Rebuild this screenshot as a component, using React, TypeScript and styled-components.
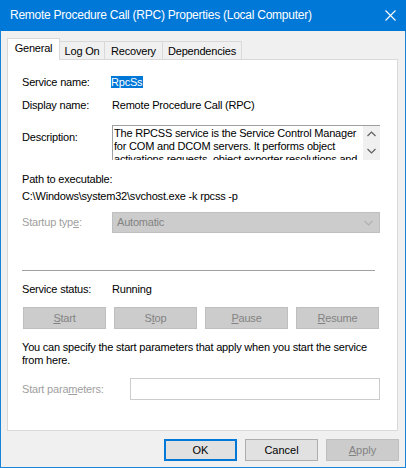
import styled, { createGlobalStyle } from "styled-components";

const GlobalStyle = createGlobalStyle`
  html, body {
    margin: 0;
    padding: 0;
    background: #f0f0f0;
  }
  body {
    font-family: "Liberation Sans", Arial, sans-serif;
    font-size: 11px;
    letter-spacing: -0.2px;
    color: #000;
  }
`;

const Window = styled.div`
  box-sizing: border-box;
  width: 406px;
  height: 468px;
  border: 1px solid #1883d7;
  border-top: 0;
  background: #f0f0f0;
  display: flex;
  flex-direction: column;
`;

const TitleBar = styled.div`
  height: 31px;
  margin: 0 -1px;
  background: #0078d7;
  color: #fff;
  display: flex;
  align-items: center;
  padding: 0 0 1px 10px;
  box-sizing: border-box;
  font-size: 12px;
  letter-spacing: -0.25px;
`;

const Title = styled.span`
  flex: 1;
`;

const CloseButton = styled.div`
  width: 32px;
  height: 30px;
  display: flex;
  align-items: center;
  justify-content: center;
`;

const Body = styled.div`
  flex: 1;
  padding: 7px 7px 0 6px;
  display: flex;
  flex-direction: column;
`;

const TabBar = styled.div`
  display: flex;
  align-items: flex-end;
  height: 21px;
`;

const Tab = styled.div<{ $active?: boolean; $w: number }>`
  box-sizing: border-box;
  width: ${(p) => p.$w}px;
  height: ${(p) => (p.$active ? 22 : 18)}px;
  margin-bottom: ${(p) => (p.$active ? -1 : 0)}px;
  margin-right: -1px;
  border: 1px solid #d9d9d9;
  border-bottom: 0;
  background: ${(p) => (p.$active ? "#fff" : "#f0f0f0")};
  position: relative;
  z-index: ${(p) => (p.$active ? 1 : 0)};
  display: flex;
  align-items: center;
  justify-content: center;
  padding-bottom: ${(p) => (p.$active ? 3 : 0)}px;
`;

const Panel = styled.div`
  box-sizing: border-box;
  height: 372px;
  border: 1px solid #d9d9d9;
  background: #fff;
  padding: 16px 18px 0 14px;
  display: flex;
  flex-direction: column;
`;

const Field = styled.div<{ $top: number; $label?: number; $align?: string }>`
  display: grid;
  grid-template-columns: ${(p) => p.$label ?? 90}px 1fr;
  align-items: ${(p) => p.$align ?? "center"};
  margin-top: ${(p) => p.$top}px;
  line-height: 13px;
`;

const Label = styled.span<{ $disabled?: boolean; $pad?: number }>`
  color: ${(p) => (p.$disabled ? "#a0a0a0" : "#000")};
  padding-top: ${(p) => p.$pad ?? 0}px;
`;

const Line = styled.div<{ $top: number }>`
  margin-top: ${(p) => p.$top}px;
  line-height: 13px;
`;

const Selected = styled.span`
  background: #0078d7;
  color: #fff;
  padding: 0 1px 0 0;
  margin-left: -1px;
  line-height: 12px;
  display: inline-block;
`;

const DescBox = styled.div`
  box-sizing: border-box;
  height: 35px;
  border-top: 1px solid #a0a0a0;
  border-left: 1px solid #a0a0a0;
  display: flex;
  overflow: hidden;
  margin-right: -1px;
`;

const DescText = styled.div`
  flex: 1;
  padding: 1px 0 0 1px;
  line-height: 13px;
  overflow: hidden;
`;

const ScrollBar = styled.div`
  width: 17px;
  background: #f0f0f0;
  display: flex;
  flex-direction: column;
  align-items: center;
  justify-content: space-between;
  padding: 5px 0 6px;
`;

const Combo = styled.div`
  box-sizing: border-box;
  height: 21px;
  border: 1px solid #bfbfbf;
  background: #cccccc;
  color: #838383;
  display: flex;
  align-items: center;
  justify-content: space-between;
  padding: 0 6px 0 4px;
  margin-right: -1px;
`;

const Separator = styled.div`
  height: 1px;
  background: #a0a0a0;
  margin: 37px 4px 0 0;
`;

const ButtonRow = styled.div`
  display: grid;
  grid-template-columns: repeat(4, 1fr);
  column-gap: 8px;
  margin: 11px 0 0 1px;
`;

const Button = styled.div<{ $disabled?: boolean; $default?: boolean }>`
  box-sizing: border-box;
  height: 22px;
  display: flex;
  align-items: center;
  justify-content: center;
  background: ${(p) => (p.$disabled ? "#cccccc" : "#e1e1e1")};
  color: ${(p) => (p.$disabled ? "#838383" : "#000")};
  border: ${(p) =>
    p.$default
      ? "2px solid #0078d7"
      : p.$disabled
      ? "1px solid #bfbfbf"
      : "1px solid #adadad"};
`;

const Input = styled.div`
  box-sizing: border-box;
  height: 22px;
  border: 1px solid #cccccc;
  background: #fff;
  margin-right: -1px;
`;

const Footer = styled.div`
  display: flex;
  justify-content: flex-end;
  gap: 8px;
  padding: 8px 0 0;
  margin-right: -1px;
`;

const FooterButton = styled(Button)`
  width: 73px;
  letter-spacing: 0;
`;

const Chevron = ({ up, color }: { up?: boolean; color: string }) => (
  <svg width="9" height="6" viewBox="0 0 9 6">
    <path
      d={up ? "M0.5 5 L4.5 1 L8.5 5" : "M0.5 1 L4.5 5 L8.5 1"}
      fill="none"
      stroke={color}
      strokeWidth="1.2"
    />
  </svg>
);

export default function App() {
  return (
    <>
      <GlobalStyle />
      <Window>
        <TitleBar>
          <Title>Remote Procedure Call (RPC) Properties (Local Computer)</Title>
          <CloseButton>
            <svg width="11" height="11" viewBox="0 0 11 11">
              <path d="M0.5 0.5 L10.5 10.5 M10.5 0.5 L0.5 10.5" stroke="#fff" strokeWidth="1.1" />
            </svg>
          </CloseButton>
        </TitleBar>
        <Body>
          <TabBar>
            <Tab $active $w={53}>General</Tab>
            <Tab $w={46}>Log On</Tab>
            <Tab $w={59}>Recovery</Tab>
            <Tab $w={80}>Dependencies</Tab>
          </TabBar>
          <Panel>
            <Field $top={0}>
              <Label>Service name:</Label>
              <span>
                <Selected>RpcSs</Selected>
              </span>
            </Field>
            <Field $top={10}>
              <Label>Display name:</Label>
              <span>Remote Procedure Call (RPC)</span>
            </Field>
            <Field $top={13} $align="start">
              <Label $pad={6}>Description:</Label>
              <DescBox>
                <DescText>
                  The RPCSS service is the Service Control Manager for COM and
                  DCOM servers. It performs object activations requests, object
                  exporter resolutions and distributed garbage collection for
                  COM and DCOM servers.
                </DescText>
                <ScrollBar>
                  <Chevron up color="#606060" />
                  <Chevron color="#606060" />
                </ScrollBar>
              </DescBox>
            </Field>
            <Line $top={13}>Path to executable:</Line>
            <Line $top={4}>C:\Windows\system32\svchost.exe -k rpcss -p</Line>
            <Field $top={9}>
              <Label $disabled>
                Startup typ<u>e</u>:
              </Label>
              <Combo>
                <span>Automatic</span>
                <Chevron color="#b0b0b0" />
              </Combo>
            </Field>
            <Separator />
            <Field $top={12}>
              <Label>Service status:</Label>
              <span>Running</span>
            </Field>
            <ButtonRow>
              <Button $disabled>
                <span>
                  <u>S</u>tart
                </span>
              </Button>
              <Button $disabled>
                <span>
                  S<u>t</u>op
                </span>
              </Button>
              <Button $disabled>
                <span>
                  <u>P</u>ause
                </span>
              </Button>
              <Button $disabled>
                <span>
                  <u>R</u>esume
                </span>
              </Button>
            </ButtonRow>
            <Line $top={12}>
              You can specify the start parameters that apply when you start the
              service from here.
            </Line>
            <Field $top={11} $label={108}>
              <Label $disabled>
                Start para<u>m</u>eters:
              </Label>
              <Input />
            </Field>
          </Panel>
          <Footer>
            <FooterButton $default>OK</FooterButton>
            <FooterButton>Cancel</FooterButton>
            <FooterButton $disabled>
              <span>
                <u>A</u>pply
              </span>
            </FooterButton>
          </Footer>
        </Body>
      </Window>
    </>
  );
}
